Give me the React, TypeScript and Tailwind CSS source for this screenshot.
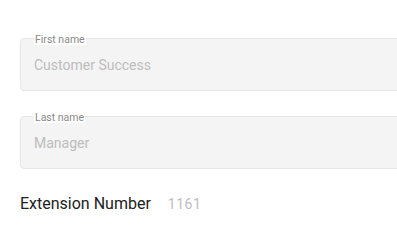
import React from 'react';

const Field: React.FC<{ label: string; value: string }> = ({ label, value }) => (
  <div className="relative w-[400px] h-[53px] rounded-[4px] border border-[#e6e6e6] bg-[#f4f4f4] flex items-center px-[13px]">
    <span className="absolute left-[13px] top-[-5px] bg-white px-px text-[10.5px] leading-[11px] text-[#8a8a8a]">
      {label}
    </span>
    <span className="text-[14px] text-[#bdbdbd] leading-none">{value}</span>
  </div>
);

const App: React.FC = () => {
  return (
    <div className="w-[397px] h-[226px] overflow-hidden bg-white font-['Roboto',sans-serif]">
      <div className="pl-5 pt-[38px] flex flex-col">
        <Field label="First name" value="Customer Success" />
        <div className="mt-[25px]">
          <Field label="Last name" value="Manager" />
        </div>
        <div className="mt-[27px] flex items-center">
          <span className="text-[16px] text-[#212121] leading-none">Extension Number</span>
          <span className="ml-[17px] text-[14px] text-[#bdbdbd] tracking-[0.5px] leading-none">1161</span>
        </div>
      </div>
    </div>
  );
};

export default App;
